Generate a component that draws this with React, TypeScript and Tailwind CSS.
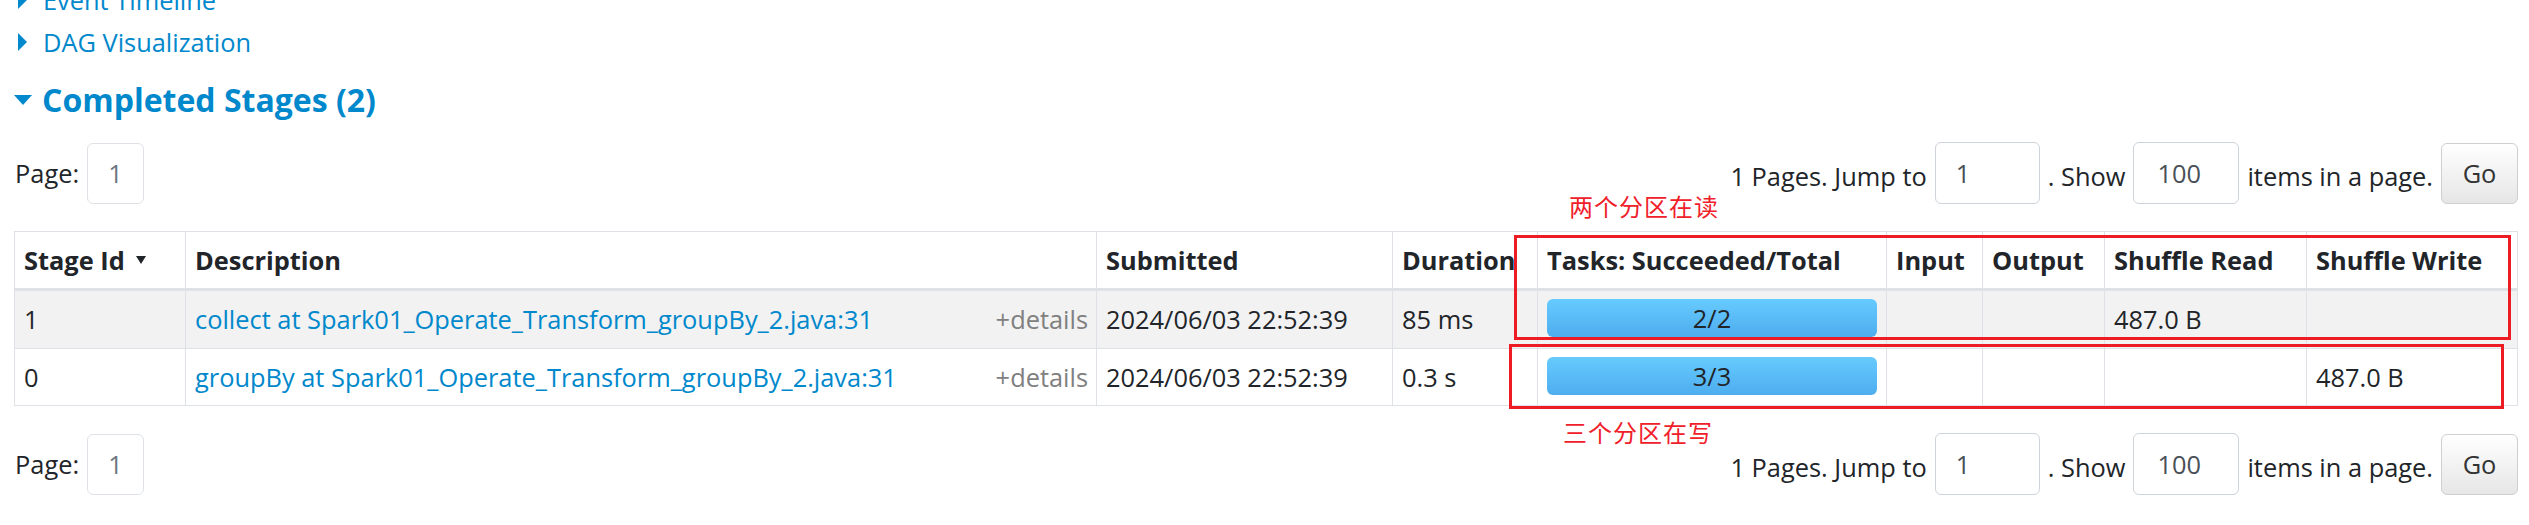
import React from "react";

const headers = [
  "Stage Id",
  "Description",
  "Submitted",
  "Duration",
  "Tasks: Succeeded/Total",
  "Input",
  "Output",
  "Shuffle Read",
  "Shuffle Write",
];

const stages = [
  {
    id: "1",
    desc: "collect at Spark01_Operate_Transform_groupBy_2.java:31",
    submitted: "2024/06/03 22:52:39",
    duration: "85 ms",
    tasks: "2/2",
    read: "487.0 B",
    write: "",
  },
  {
    id: "0",
    desc: "groupBy at Spark01_Operate_Transform_groupBy_2.java:31",
    submitted: "2024/06/03 22:52:39",
    duration: "0.3 s",
    tasks: "3/3",
    read: "",
    write: "487.0 B",
  },
];

function Pager() {
  return (
    <div className="flex h-[62px] items-center justify-between">
      <div className="flex items-center gap-[8px] pl-[1px]">
        <span>Page:</span>
        <span className="flex h-[61px] w-[57px] items-center justify-center rounded-[6px] border border-[#dee2e6] text-[#6c757d]">
          1
        </span>
      </div>
      <div className="flex items-center gap-[8px]">
        <span className="pt-[6px]">1 Pages. Jump to</span>
        <span className="flex h-[62px] w-[105px] items-center rounded-[6px] border border-[#ced4da] pl-[20px] text-[#495057]">
          1
        </span>
        <span className="pt-[6px]">. Show</span>
        <span className="flex h-[62px] w-[106px] items-center rounded-[6px] border border-[#ced4da] pl-[23px] text-[#495057]">
          100
        </span>
        <span className="pt-[6px]">items in a page.</span>
        <button className="flex h-[61px] w-[77px] items-center justify-center rounded-[6px] border border-[#cfcfcf] bg-gradient-to-b from-white to-[#e6e6e6] text-[#333]">
          Go
        </button>
      </div>
    </div>
  );
}

export default function App() {
  return (
    <div className="relative h-[525px] w-full overflow-hidden bg-white font-['Open_Sans','Noto_Sans_CJK_SC',sans-serif] text-[25.4px] text-[#212529]">
      <div className="ml-[14px] w-[2504px]">
        {/* collapsed sections */}
        <div className="-mt-[21px] text-[#0088cc]">
          {["Event Timeline", "DAG Visualization"].map((t) => (
            <div key={t} className="flex h-[42px] items-center">
              <span className="ml-[4px] mr-[16px] h-0 w-0 border-y-[9px] border-l-[9px] border-y-transparent border-l-[#0088cc]" />
              <span>{t}</span>
            </div>
          ))}
        </div>

        <div className="mt-[12px] flex h-[50px] items-center text-[32px] font-bold text-[#0088cc]">
          <span className="mr-[10px] h-0 w-0 border-x-[9px] border-t-[10px] border-x-transparent border-t-[#0088cc]" />
          <span>Completed Stages (2)</span>
        </div>

        <div className="mt-[17px]">
          <Pager />
        </div>

        {/* stage table */}
        <div className="mt-[27px] grid grid-cols-[171px_911px_296px_145px_349px_96px_122px_202px_211px] border-l border-t border-[#dee2e6]">
          {headers.map((h, i) => (
            <div
              key={h}
              className="flex h-[59px] items-center border-b-[3px] border-r border-[#dee2e6] px-[9px] font-bold"
            >
              {h}
              {i === 0 && (
                <span className="ml-[11px] h-0 w-0 border-x-[5px] border-t-[8px] border-x-transparent border-t-[#212529]" />
              )}
            </div>
          ))}
          {stages.map((s, r) => {
            const row = r === 0 ? "h-[58px] bg-[#f2f2f2]" : "h-[57px] bg-white";
            const cell = `flex items-center border-b border-r border-[#dee2e6] px-[9px] ${row}`;
            return (
              <React.Fragment key={s.id}>
                <div className={cell}>{s.id}</div>
                <div className={`${cell} justify-between pr-[8px]`}>
                  <span className="text-[#0088cc]">{s.desc}</span>
                  <span className="text-[#808080]">+details</span>
                </div>
                <div className={cell}>{s.submitted}</div>
                <div className={cell}>{s.duration}</div>
                <div className={`border-b border-r border-[#dee2e6] px-[9px] pt-[8px] ${row}`}>
                  <div className="flex h-[38px] items-center justify-center rounded-[6px] bg-gradient-to-b from-[#66cbfe] to-[#4eadef]">
                    {s.tasks}
                  </div>
                </div>
                <div className={cell}></div>
                <div className={cell}></div>
                <div className={cell}>{s.read}</div>
                <div className={cell}>{s.write}</div>
              </React.Fragment>
            );
          })}
        </div>

        <div className="mt-[27px]">
          <Pager />
        </div>
      </div>

      {/* annotations */}
      <div className="absolute left-[1569px] top-[195px] text-[24px] leading-[24px] tracking-[1px] text-[#f0202a]">
        两个分区在读
      </div>
      <div className="absolute left-[1514px] top-[235px] h-[105px] w-[997px] border-[3px] border-[#ed1c24]" />
      <div className="absolute left-[1509px] top-[344px] h-[65px] w-[995px] border-[3px] border-[#ed1c24]" />
      <div className="absolute left-[1563px] top-[421px] text-[24px] leading-[24px] tracking-[1px] text-[#f0202a]">
        三个分区在写
      </div>
    </div>
  );
}
